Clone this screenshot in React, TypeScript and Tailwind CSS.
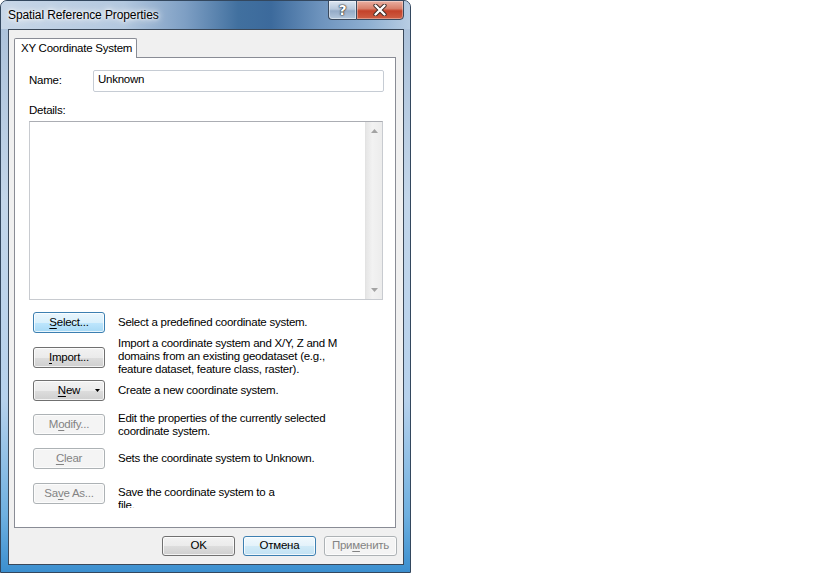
import type { ReactNode } from 'react';

type Variant = 'normal' | 'hot' | 'default' | 'disabled';

const variants: Record<Variant, string> = {
  normal:
    'border-[#707070] text-black bg-[linear-gradient(to_bottom,#f2f2f2_0%,#ebebeb_50%,#dddddd_51%,#cfcfcf_100%)]',
  hot: 'border-[#3c7fb1] text-black bg-[linear-gradient(to_bottom,#eaf6fd_0%,#d9f0fc_50%,#bee6fd_51%,#a7d9f5_100%)]',
  default:
    'border-[#3c7fb1] text-black bg-[linear-gradient(to_bottom,#f1f9fd_0%,#e3f2fa_50%,#d0eaf7_51%,#c3e2f3_100%)]',
  disabled: 'border-[#adb2b5] text-[#838383] bg-[#f4f4f4]',
};

function WinButton({
  children,
  variant = 'normal',
  arrow = false,
}: {
  children: ReactNode;
  variant?: Variant;
  arrow?: boolean;
}) {
  return (
    <div
      className={`relative h-[21px] w-[72px] shrink-0 rounded-[3px] border flex items-center justify-center shadow-[inset_0_0_0_1px_rgba(255,255,255,0.75)] ${variants[variant]}`}
    >
      <span className="leading-none">{children}</span>
      {arrow && (
        <svg className="absolute right-[4px] top-[8px]" width="5" height="3" viewBox="0 0 5 3">
          <path d="M0 0h5L2.5 3z" fill="#000" />
        </svg>
      )}
    </div>
  );
}

// mnemonic letter
function U({ c }: { c: string }) {
  return <span className="underline underline-offset-[2px] decoration-1">{c}</span>;
}

export default function App() {
  return (
    <div className="w-[819px] h-[573px] bg-white flex items-start font-['Liberation_Sans',Arial,sans-serif] text-[11.5px] tracking-[-0.25px] text-black">
      {/* Window frame */}
      <div className="w-[411px] h-[573px] flex flex-col rounded-t-[7px] border border-[#33475e] bg-[linear-gradient(to_bottom,#a9bfd8_0%,#c3d6ea_35%,#b6d1ec_70%,#6fb0e0_90%,#3b8fcf_100%)] overflow-hidden">
        {/* Title bar */}
        <div className="h-[28px] shrink-0 flex items-start bg-[linear-gradient(to_right,#c8d7e8_0%,#b3c8df_30%,#7e9fc4_45%,#41709f_58%,#3c6a9c_66%,#6d93bd_78%,#8fb0d2_90%,#b8cde3_100%)]">
          <span className="ml-[7px] mt-[7px] text-[12px] tracking-[-0.1px] leading-[14px] [text-shadow:0_0_6px_#fff,0_0_10px_#fff,0_0_3px_#fff]">
            Spatial Reference Properties
          </span>
          <div className="ml-auto mr-[6px] -mt-[1px] flex">
            <div className="w-[28px] h-[20px] flex items-center justify-center border border-[#3a4a5e] border-r-0 rounded-bl-[4px] bg-[linear-gradient(to_bottom,#dce6f1_0%,#b7c8dc_45%,#94abc7_55%,#b3c7dc_100%)] shadow-[inset_0_0_0_1px_rgba(255,255,255,0.45)]">
              <span className="text-white font-bold text-[14px] tracking-normal font-['DejaVu_Sans',sans-serif] [text-shadow:0_0_1px_#222,0_0_1px_#222,0_0_2px_#333]">
                ?
              </span>
            </div>
            <div className="w-[48px] h-[20px] flex items-center justify-center border border-[#3a4a5e] rounded-br-[4px] bg-[linear-gradient(to_bottom,#eab0a2_0%,#d8806b_42%,#c4422a_55%,#cf5f45_100%)] shadow-[inset_0_0_0_1px_rgba(255,255,255,0.35)]">
              <svg width="14" height="12" viewBox="0 0 14 12">
                <path d="M2.5 1.5l9 9M11.5 1.5l-9 9" stroke="#3b2a26" strokeWidth="4.2" strokeLinecap="round" />
                <path d="M2.5 1.5l9 9M11.5 1.5l-9 9" stroke="#fff" strokeWidth="2.4" strokeLinecap="round" />
              </svg>
            </div>
          </div>
        </div>

        {/* Client area */}
        <div className="ml-[7px] w-[396px] h-[536px] shrink-0 border border-[#3a4859] bg-[#f0f0f0] flex flex-col">
          {/* Tab header */}
          <div className="pl-[5px] pt-[8px] flex">
            <div className="relative z-10 -mb-[1px] h-[20px] w-[123px] bg-white border border-b-0 border-[#898c95] rounded-t-[2px] pl-[6px] pt-[3px] leading-[13px]">
              XY Coordinate System
            </div>
          </div>

          {/* Tab page */}
          <div className="ml-[5px] w-[382px] h-[471px] shrink-0 bg-white border border-[#898c95] flex flex-col pl-[14px] pr-[11px]">
            <div className="mt-[12px] flex items-center h-[22px]">
              <span className="w-[64px] shrink-0">Name:</span>
              <div className="flex-1 h-[22px] rounded-[2px] border border-[#c6ccd4] pl-[4px] flex items-center -mt-[1px] pb-[1px]">
                Unknown
              </div>
            </div>

            <div className="mt-[11px] leading-[14px]">Details:</div>

            <div className="mt-[4px] w-[354px] h-[179px] border border-[#c8cbd0] border-t-[#abadb3] flex justify-end">
              <div className="w-[17px] h-full bg-[linear-gradient(to_right,#e6e6e6_0%,#f2f2f2_40%,#ececec_100%)] border-l border-[#e3e3e3] flex flex-col items-center justify-between pt-[7px] pb-[7px]">
                <svg width="7" height="4" viewBox="0 0 7 4">
                  <path d="M0 4L3.5 0L7 4z" fill="#a3a3a3" />
                </svg>
                <svg width="7" height="4" viewBox="0 0 7 4">
                  <path d="M0 0h7L3.5 4z" fill="#a3a3a3" />
                </svg>
              </div>
            </div>

            {/* Actions: every row is as tall as its button, text may spill over */}
            <div className="mt-[12px] h-[21px] pl-[4px] flex items-center gap-[13px]">
              <WinButton variant="hot">
                <U c="S" />
                elect...
              </WinButton>
              <span className="leading-[13px]">Select a predefined coordinate system.</span>
            </div>

            <div className="mt-[14px] h-[21px] pl-[4px] flex items-center gap-[13px]">
              <WinButton>
                <U c="I" />
                mport...
              </WinButton>
              <span className="leading-[13px] -mt-[2px]">
                Import a coordinate system and X/Y, Z and M
                <br />
                domains from an existing geodataset (e.g.,
                <br />
                feature dataset, feature class, raster).
              </span>
            </div>

            <div className="mt-[12px] h-[21px] pl-[4px] flex items-center gap-[13px]">
              <WinButton arrow>
                <U c="N" />
                ew
              </WinButton>
              <span className="leading-[13px]">Create a new coordinate system.</span>
            </div>

            <div className="mt-[13px] h-[21px] pl-[4px] flex items-center gap-[13px]">
              <WinButton variant="disabled">
                M<U c="o" />
                dify...
              </WinButton>
              <span className="leading-[13px] mt-[1px]">
                Edit the properties of the currently selected
                <br />
                coordinate system.
              </span>
            </div>

            <div className="mt-[13px] h-[21px] pl-[4px] flex items-center gap-[13px]">
              <WinButton variant="disabled">
                <U c="C" />
                lear
              </WinButton>
              <span className="leading-[13px]">Sets the coordinate system to Unknown.</span>
            </div>

            <div className="mt-[14px] h-[21px] pl-[4px] flex items-start gap-[13px]">
              <WinButton variant="disabled">
                Sa<U c="v" />e As...
              </WinButton>
              <div className="h-[25px] overflow-hidden pt-[3px] leading-[13px]">
                Save the coordinate system to a
                <br />
                file.
              </div>
            </div>
          </div>

          {/* Dialog buttons */}
          <div className="mt-[8px] mr-[6px] flex justify-end gap-[8px]">
            <div className="[&>div]:w-[73px] [&>div]:h-[20px]">
              <WinButton>OK</WinButton>
            </div>
            <div className="[&>div]:w-[73px] [&>div]:h-[20px]">
              <WinButton variant="default">Отмена</WinButton>
            </div>
            <div className="[&>div]:w-[73px] [&>div]:h-[20px]">
              <WinButton variant="disabled">
                При<U c="м" />енить
              </WinButton>
            </div>
          </div>
        </div>
      </div>
    </div>
  );
}
